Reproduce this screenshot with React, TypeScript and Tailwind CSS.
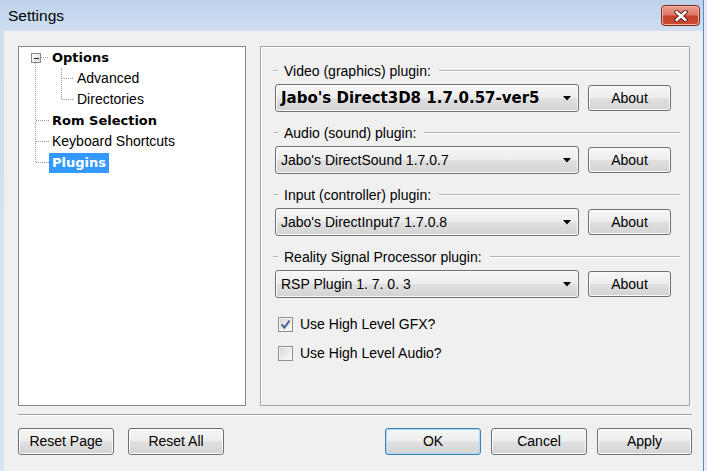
import React from "react";

const sans = "font-['Liberation_Sans',Arial,sans-serif]";
const boldFont = "font-['DejaVu_Sans',Verdana,sans-serif] font-bold";

const btnBase =
  "flex items-center justify-center rounded-[3px] border text-[14px] text-black " +
  "bg-[linear-gradient(#f6f6f6_0%,#ededed_48%,#e0e0e0_52%,#d3d3d3_100%)]";
const btn = btnBase + " border-[#707070] shadow-[inset_0_0_0_1px_#fbfbfb]";
const btnDefault = btnBase + " border-[#3c7fb1] shadow-[inset_0_0_0_1px_#a9dbf6]";

function TreeRow({
  children,
  indent,
  bold,
  selected,
}: {
  children: React.ReactNode;
  indent: "top" | "sub";
  bold?: boolean;
  selected?: boolean;
}) {
  return (
    <div className="h-[21px] flex items-center">
      <span
        className={
          (indent === "top" ? "ml-[30px] " : "ml-[55px] ") +
          "px-[3px] h-[20px] flex items-center whitespace-nowrap " +
          (bold ? boldFont + " text-[13px] " : sans + " text-[14px] ") +
          (selected ? "bg-[#3399ff] text-white" : "text-black")
        }
      >
        {children}
      </span>
    </div>
  );
}

function TreeLines() {
  const dot = { stroke: "#9a9a9a", strokeWidth: 1, strokeDasharray: "1 1", shapeRendering: "crispEdges" as const };
  return (
    <svg className="absolute left-0 top-0" width="120" height="130">
      <defs>
        <linearGradient id="bx" x1="0" y1="0" x2="1" y2="1">
          <stop offset="0" stopColor="#ffffff" />
          <stop offset="1" stopColor="#d6d6d6" />
        </linearGradient>
      </defs>
      <line x1="16.5" y1="16" x2="16.5" y2="116" {...dot} />
      <line x1="22" y1="10.5" x2="30" y2="10.5" {...dot} />
      <line x1="17" y1="73.5" x2="30" y2="73.5" {...dot} />
      <line x1="17" y1="94.5" x2="30" y2="94.5" {...dot} />
      <line x1="17" y1="115.5" x2="30" y2="115.5" {...dot} />
      <line x1="42.5" y1="21" x2="42.5" y2="53" {...dot} />
      <line x1="43" y1="31.5" x2="55" y2="31.5" {...dot} />
      <line x1="43" y1="52.5" x2="55" y2="52.5" {...dot} />
      <rect x="12.5" y="6.5" width="9" height="9" fill="url(#bx)" stroke="#8c8c8c" shapeRendering="crispEdges" />
      <line x1="14.5" y1="11" x2="19.5" y2="11" stroke="#1b2a44" strokeWidth="1" shapeRendering="crispEdges" />
    </svg>
  );
}

function GroupLabel({ label }: { label: string }) {
  return (
    <div className="flex items-center h-[16px]">
      <div className="w-[5px] h-[2px] bg-[linear-gradient(#b4b4b4_50%,#ffffff_50%)]" />
      <span className={sans + " text-[14px] text-black ml-[6px] mr-[8px] whitespace-nowrap"}>{label}</span>
      <div className="flex-1 h-[2px] bg-[linear-gradient(#b4b4b4_50%,#ffffff_50%)]" />
    </div>
  );
}

function Combo({ value, bold }: { value: string; bold?: boolean }) {
  return (
    <div className="flex items-center mt-[5px] ml-[2px]">
      <div className={btn + " w-[304px] h-[28px] !justify-between pl-[5px] pr-[7px]"}>
        <span
          className={
            (bold ? boldFont + " text-[15px]" : sans + " text-[14px]") + " whitespace-nowrap text-black"
          }
        >
          {value}
        </span>
        <svg width="8" height="5" viewBox="0 0 8 5">
          <path d="M0 0 H8 L4 4.5 Z" fill="#000" />
        </svg>
      </div>
      <div className={btn + " " + sans + " ml-[9px] w-[83px] h-[26px]"}>About</div>
    </div>
  );
}

function CheckRow({ label, checked, className }: { label: string; checked?: boolean; className?: string }) {
  return (
    <div className={"flex items-center h-[18px] pl-[5px] gap-[7px] " + (className ?? "")}>
      <div className="w-[15px] h-[15px] border border-[#8f8f8f] bg-[linear-gradient(135deg,#d4d4d4,#ffffff)] shadow-[inset_0_0_0_1px_#f2f2f2] flex items-center justify-center">
        {checked && (
          <svg width="11" height="11" viewBox="0 0 10 10">
            <path d="M1.5 5 L4 7.8 L8.7 1.5" fill="none" stroke="#4b5f98" strokeWidth="1.8" />
          </svg>
        )}
      </div>
      <span className={sans + " text-[14px] text-black whitespace-nowrap"}>{label}</span>
    </div>
  );
}

export default function App() {
  return (
    <div className="w-[707px] h-[471px] flex bg-[#e4edf7] overflow-hidden">
      <div className="w-[704px] h-full flex flex-col border-r border-[#5b8cc0] bg-[linear-gradient(#bcd2eb_0px,#d0dff0_31px,#d8e4f2_100%)]">
        <div className="h-[31px] flex items-center justify-between pl-[8px] pr-[3px] shrink-0">
          <span className={sans + " text-[15.5px] text-black"}>Settings</span>
          <div className="w-[39px] h-[21px] rounded-[4px] border border-[#7d2a1e] bg-[linear-gradient(#eaa190_0%,#dc7a64_45%,#c8402a_55%,#c94b33_100%)] shadow-[inset_0_0_0_1px_#f0b7a8] flex items-center justify-center">
            <svg width="14" height="12" viewBox="0 0 14 12">
              <path d="M2.5 2 L11.5 10 M11.5 2 L2.5 10" stroke="#5a1f15" strokeWidth="4.4" strokeLinecap="round" />
              <path d="M2.5 2 L11.5 10 M11.5 2 L2.5 10" stroke="#ffffff" strokeWidth="2.6" strokeLinecap="round" />
            </svg>
          </div>
        </div>
        <div className="flex-1 ml-[4px] bg-[#f0f0f0] flex flex-col pl-[14px] pr-[11px] pt-[15px]">
          <div className="flex gap-[14px] h-[360px] pr-[1px]">
            <div className="relative w-[228px] h-full bg-white border border-[#828790]">
              <TreeLines />
              <div className="flex flex-col">
                <TreeRow indent="top" bold>Options</TreeRow>
                <TreeRow indent="sub">Advanced</TreeRow>
                <TreeRow indent="sub">Directories</TreeRow>
                <TreeRow indent="top" bold>Rom Selection</TreeRow>
                <TreeRow indent="top">Keyboard Shortcuts</TreeRow>
                <TreeRow indent="top" bold selected>Plugins</TreeRow>
              </div>
            </div>
            <div className="w-[430px] h-full border border-[#a5a5a5] shadow-[inset_1px_1px_0_#ffffff] pl-[12px] pr-[9px] pt-[16px] flex flex-col">
              <GroupLabel label="Video (graphics) plugin:" />
              <Combo value="Jabo's Direct3D8 1.7.0.57-ver5" bold />
              <div className="mt-[13px]">
                <GroupLabel label="Audio (sound) plugin:" />
                <Combo value="Jabo's DirectSound 1.7.0.7" />
              </div>
              <div className="mt-[13px]">
                <GroupLabel label="Input (controller) plugin:" />
                <Combo value="Jabo's DirectInput7 1.7.0.8" />
              </div>
              <div className="mt-[13px]">
                <GroupLabel label="Reality Signal Processor plugin:" />
                <Combo value="RSP Plugin 1. 7. 0. 3" />
              </div>
              <CheckRow className="mt-[17px]" label="Use High Level GFX?" checked />
              <CheckRow className="mt-[11px]" label="Use High Level Audio?" />
            </div>
          </div>
          <div className="mt-[8px] h-[2px] bg-[linear-gradient(#a0a0a0_50%,#ffffff_50%)]" />
          <div className={"mt-[12px] flex items-center " + sans}>
            <div className={btn + " w-[96px] h-[27px]"}>Reset Page</div>
            <div className={btn + " w-[96px] h-[27px] ml-[14px]"}>Reset All</div>
            <div className="flex-1" />
            <div className={btnDefault + " w-[96px] h-[27px]"}>OK</div>
            <div className={btn + " w-[96px] h-[27px] ml-[10px]"}>Cancel</div>
            <div className={btn + " w-[95px] h-[27px] ml-[10px]"}>Apply</div>
          </div>
        </div>
      </div>
    </div>
  );
}
